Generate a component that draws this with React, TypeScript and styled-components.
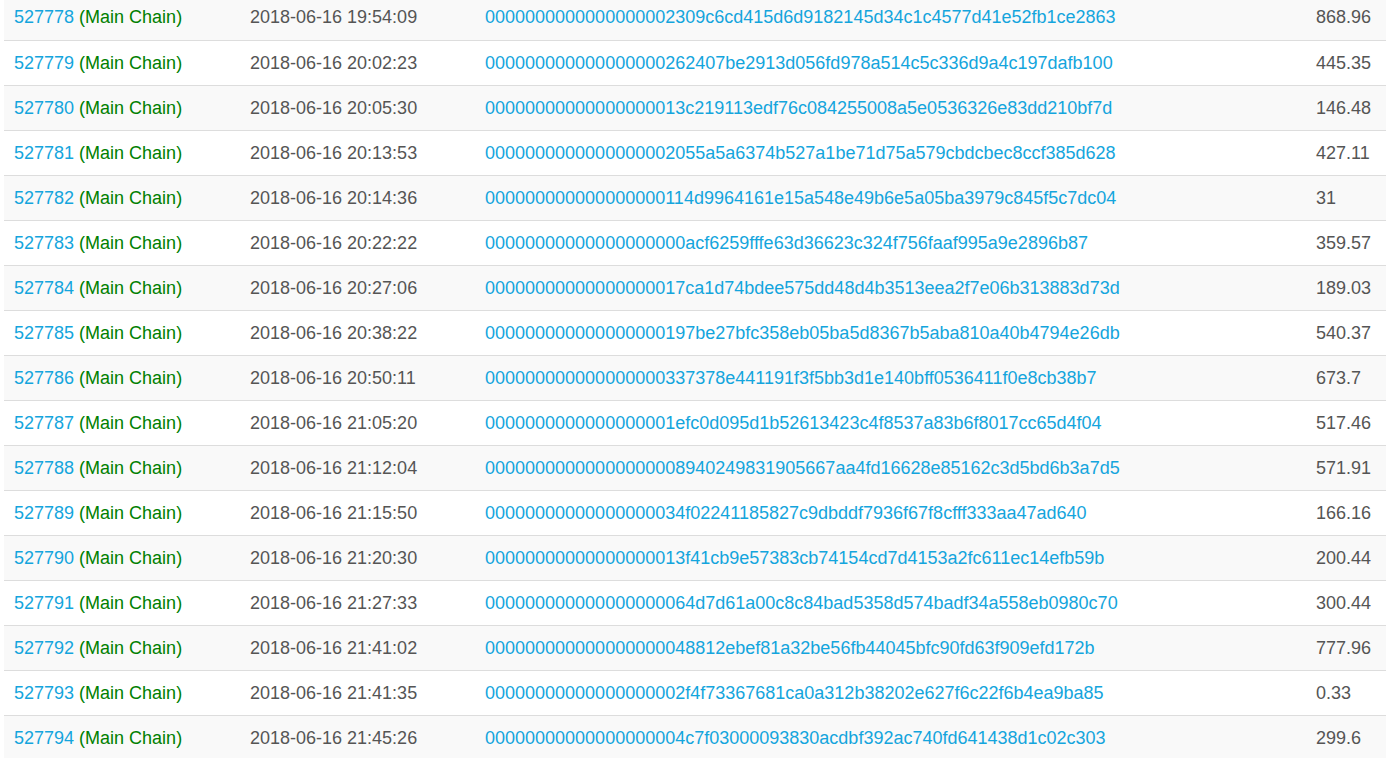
import React from "react";
import styled, { createGlobalStyle } from "styled-components";

const Global = createGlobalStyle`
  html, body { margin: 0; padding: 0; background: #fff; overflow: hidden; }
  body { font-family: "Liberation Sans", Arial, sans-serif; }
`;

const Wrap = styled.div`
  padding: 0 0 0 4px;
  margin-top: -5px;
`;

const Table = styled.table`
  width: 1382px;
  table-layout: fixed;
  border-collapse: collapse;
  font-size: 18px;
  color: #555;
`;

const Row = styled.tr<{ $striped: boolean }>`
  background: ${(p) => (p.$striped ? "#f9f9f9" : "#fff")};
  border-bottom: 1px solid #dddddd;
`;

const Cell = styled.td`
  height: 45px;
  padding: 0 10px;
  line-height: 20px;
  vertical-align: middle;
  white-space: nowrap;
  box-sizing: border-box;
`;

const Link = styled.a`
  color: #14a5dd;
  text-decoration: none;
`;

const Chain = styled.span`
  color: #008000;
`;

const rows: [number, string, string, string][] = [
  [527778, "2018-06-16 19:54:09", "0000000000000000002309c6cd415d6d9182145d34c1c4577d41e52fb1ce2863", "868.96"],
  [527779, "2018-06-16 20:02:23", "000000000000000000262407be2913d056fd978a514c5c336d9a4c197dafb100", "445.35"],
  [527780, "2018-06-16 20:05:30", "00000000000000000013c219113edf76c084255008a5e0536326e83dd210bf7d", "146.48"],
  [527781, "2018-06-16 20:13:53", "0000000000000000002055a5a6374b527a1be71d75a579cbdcbec8ccf385d628", "427.11"],
  [527782, "2018-06-16 20:14:36", "000000000000000000114d9964161e15a548e49b6e5a05ba3979c845f5c7dc04", "31"],
  [527783, "2018-06-16 20:22:22", "00000000000000000000acf6259fffe63d36623c324f756faaf995a9e2896b87", "359.57"],
  [527784, "2018-06-16 20:27:06", "00000000000000000017ca1d74bdee575dd48d4b3513eea2f7e06b313883d73d", "189.03"],
  [527785, "2018-06-16 20:38:22", "000000000000000000197be27bfc358eb05ba5d8367b5aba810a40b4794e26db", "540.37"],
  [527786, "2018-06-16 20:50:11", "000000000000000000337378e441191f3f5bb3d1e140bff0536411f0e8cb38b7", "673.7"],
  [527787, "2018-06-16 21:05:20", "0000000000000000001efc0d095d1b52613423c4f8537a83b6f8017cc65d4f04", "517.46"],
  [527788, "2018-06-16 21:12:04", "00000000000000000008940249831905667aa4fd16628e85162c3d5bd6b3a7d5", "571.91"],
  [527789, "2018-06-16 21:15:50", "00000000000000000034f02241185827c9dbddf7936f67f8cfff333aa47ad640", "166.16"],
  [527790, "2018-06-16 21:20:30", "00000000000000000013f41cb9e57383cb74154cd7d4153a2fc611ec14efb59b", "200.44"],
  [527791, "2018-06-16 21:27:33", "000000000000000000064d7d61a00c8c84bad5358d574badf34a558eb0980c70", "300.44"],
  [527792, "2018-06-16 21:41:02", "000000000000000000048812ebef81a32be56fb44045bfc90fd63f909efd172b", "777.96"],
  [527793, "2018-06-16 21:41:35", "00000000000000000002f4f73367681ca0a312b38202e627f6c22f6b4ea9ba85", "0.33"],
  [527794, "2018-06-16 21:45:26", "00000000000000000004c7f03000093830acdbf392ac740fd641438d1c02c303", "299.6"],
];

export default function App() {
  return (
    <>
      <Global />
      <Wrap>
        <Table>
          <colgroup>
            <col style={{ width: 236 }} />
            <col style={{ width: 235 }} />
            <col style={{ width: 831 }} />
            <col style={{ width: 80 }} />
          </colgroup>
          <tbody>
            {rows.map(([h, t, hash, v], i) => (
              <Row key={h} $striped={i % 2 === 0}>
                <Cell>
                  <Link href="#">{h}</Link> <Chain>(Main Chain)</Chain>
                </Cell>
                <Cell>{t}</Cell>
                <Cell>
                  <Link href="#">{hash}</Link>
                </Cell>
                <Cell>{v}</Cell>
              </Row>
            ))}
          </tbody>
        </Table>
      </Wrap>
    </>
  );
}
